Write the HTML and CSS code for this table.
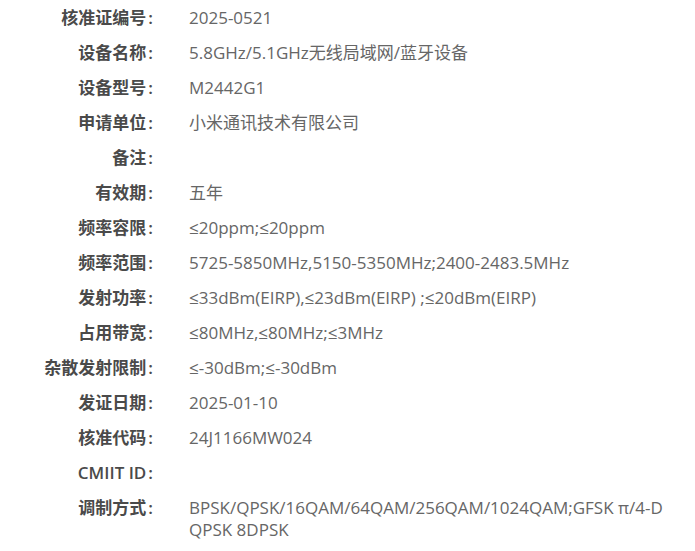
FILE: index.html
```html
<!DOCTYPE html>
<html lang="zh-CN">
<head>
    <meta charset="UTF-8">
    <title>核准信息</title>
    <link rel="stylesheet" href="styles.css">
</head>
<body>

<!-- 核准信息列表 -->
<div class="info-list">
    <div class="info-row"><span class="info-label">核准证编号<i>:</i></span><span class="info-value">2025-0521</span></div>
    <div class="info-row"><span class="info-label">设备名称<i>:</i></span><span class="info-value">5.8GHz/5.1GHz无线局域网/蓝牙设备</span></div>
    <div class="info-row"><span class="info-label">设备型号<i>:</i></span><span class="info-value">M2442G1</span></div>
    <div class="info-row"><span class="info-label">申请单位<i>:</i></span><span class="info-value">小米通讯技术有限公司</span></div>
    <div class="info-row"><span class="info-label">备注<i>:</i></span><span class="info-value"></span></div>
    <div class="info-row"><span class="info-label">有效期<i>:</i></span><span class="info-value">五年</span></div>
    <div class="info-row"><span class="info-label">频率容限<i>:</i></span><span class="info-value">≤20ppm;≤20ppm</span></div>
    <div class="info-row"><span class="info-label">频率范围<i>:</i></span><span class="info-value">5725-5850MHz,5150-5350MHz;2400-2483.5MHz</span></div>
    <div class="info-row"><span class="info-label">发射功率<i>:</i></span><span class="info-value">≤33dBm(EIRP),≤23dBm(EIRP) ;≤20dBm(EIRP)</span></div>
    <div class="info-row"><span class="info-label">占用带宽<i>:</i></span><span class="info-value">≤80MHz,≤80MHz;≤3MHz</span></div>
    <div class="info-row"><span class="info-label">杂散发射限制<i>:</i></span><span class="info-value">≤-30dBm;≤-30dBm</span></div>
    <div class="info-row"><span class="info-label">发证日期<i>:</i></span><span class="info-value">2025-01-10</span></div>
    <div class="info-row"><span class="info-label">核准代码<i>:</i></span><span class="info-value">24J1166MW024</span></div>
    <div class="info-row"><span class="info-label">CMIIT ID<i>:</i></span><span class="info-value"></span></div>
    <div class="info-row"><span class="info-label">调制方式<i>:</i></span><span class="info-value">BPSK/QPSK/16QAM/64QAM/256QAM/1024QAM;GFSK π/4-DQPSK 8DPSK</span></div>
</div>

</body>
</html>
```

FILE: styles.css
```css
/* Base */
body {
    margin: 0;
    padding: 0;
    background-color: #fff;
    font-family: "Open Sans", "Noto Sans CJK SC", sans-serif;
    font-size: 17px;
    color: #666;
}

/* Info list */
.info-list {
    width: 670px;
}

.info-row {
    display: flex;
    padding: 6.5px 0;
    line-height: 22px;
}

.info-label {
    flex: 0 0 153px;
    text-align: right;
    font-weight: 600;
    color: #4a4a4a;
}

.info-label i {
    font-style: normal;
    margin-left: 2px;
}

.info-value {
    flex: 1;
    margin-left: 36px;
    word-break: break-all;
}
```
